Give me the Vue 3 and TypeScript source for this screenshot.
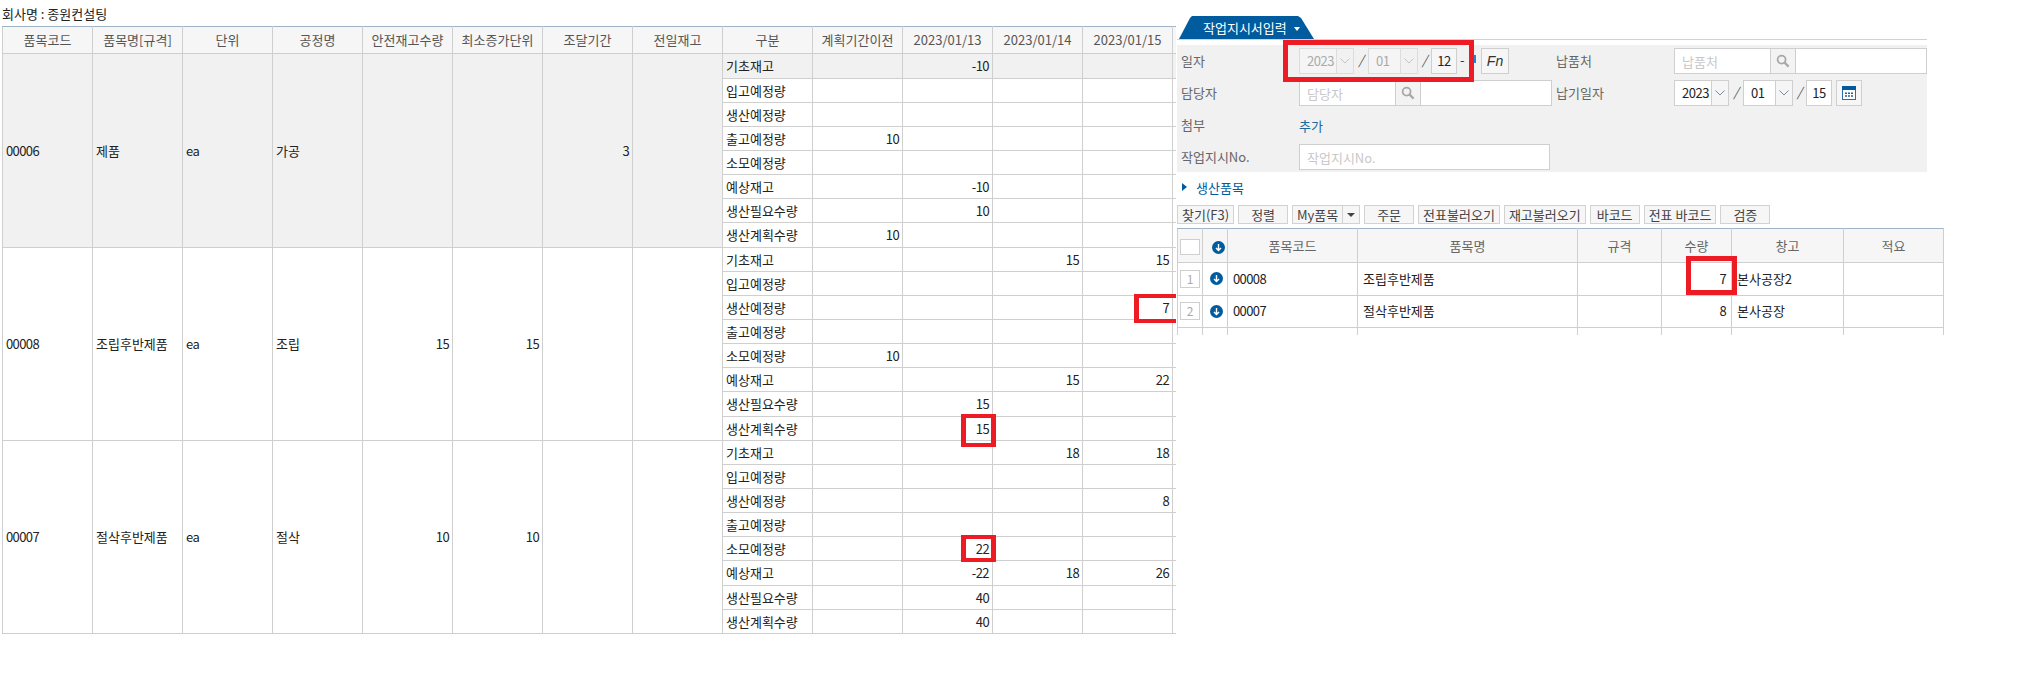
<script setup lang="ts">
interface PlanRow {
  label: string
  tall?: boolean
  shaded?: boolean
  values: string[]
}
interface PlanGroup {
  code: string
  name: string
  unit: string
  process: string
  safety: string
  minimum: string
  lead: string
  shaded: boolean
  rows: PlanRow[]
}
interface OrderItem {
  no: number
  code: string
  name: string
  qty: string
  store: string
}

const headers: string[] = ['품목코드', '품목명[규격]', '단위', '공정명', '안전재고수량', '최소증가단위', '조달기간', '전일재고', '구분', '계획기간이전', '2023/01/13', '2023/01/14', '2023/01/15', '']

function makeRows(vals: string[][], tallIndex: number[], shadeFirst: boolean): PlanRow[] {
  const labels = ['기초재고', '입고예정량', '생산예정량', '출고예정량', '소모예정량', '예상재고', '생산필요수량', '생산계획수량']
  return labels.map((label, i) => ({
    label,
    tall: tallIndex.includes(i),
    shaded: shadeFirst && i === 0,
    values: vals[i],
  }))
}

const groups: PlanGroup[] = [
  {
    code: '00006', name: '제품', unit: 'ea', process: '가공', safety: '', minimum: '', lead: '3', shaded: true,
    rows: makeRows([
      ['', '-10', '', '', ''],
      ['', '', '', '', ''],
      ['', '', '', '', ''],
      ['10', '', '', '', ''],
      ['', '', '', '', ''],
      ['', '-10', '', '', ''],
      ['', '10', '', '', ''],
      ['10', '', '', '', ''],
    ], [0, 7], true),
  },
  {
    code: '00008', name: '조립후반제품', unit: 'ea', process: '조립', safety: '15', minimum: '15', lead: '', shaded: false,
    rows: makeRows([
      ['', '', '15', '15', ''],
      ['', '', '', '', ''],
      ['', '', '', '7', ''],
      ['', '', '', '', ''],
      ['10', '', '', '', ''],
      ['', '', '15', '22', ''],
      ['', '15', '', '', ''],
      ['', '15', '', '', ''],
    ], [6], false),
  },
  {
    code: '00007', name: '절삭후반제품', unit: 'ea', process: '절삭', safety: '10', minimum: '10', lead: '', shaded: false,
    rows: makeRows([
      ['', '', '18', '18', ''],
      ['', '', '', '', ''],
      ['', '', '', '8', ''],
      ['', '', '', '', ''],
      ['', '22', '', '', ''],
      ['', '-22', '18', '26', ''],
      ['', '40', '', '', ''],
      ['', '40', '', '', ''],
    ], [5], false),
  },
]

const toolsBefore: string[] = ['찾기(F3)', '정렬']
const toolsAfter: string[] = ['주문', '전표불러오기', '재고불러오기', '바코드', '전표 바코드', '검증']

const items: OrderItem[] = [
  { no: 1, code: '00008', name: '조립후반제품', qty: '7', store: '본사공장2' },
  { no: 2, code: '00007', name: '절삭후반제품', qty: '8', store: '본사공장' },
]
</script>

<template>
  <div class="page">
    <section class="plan">
      <div class="company">회사명 : 종원컨설팅</div>
      <div class="plan-clip">
        <table class="plan-table">
          <thead>
            <tr class="plan-head">
              <th v-for="(h, i) in headers" :key="i">{{ h }}</th>
            </tr>
          </thead>
          <tbody v-for="g in groups" :key="g.code">
            <tr v-for="(r, ri) in g.rows" :key="r.label" :class="r.tall ? 'row-tall' : 'row'">
              <template v-if="ri === 0">
                <td rowspan="8" class="num" :class="{ shade: g.shaded }">{{ g.code }}</td>
                <td rowspan="8" :class="{ shade: g.shaded }">{{ g.name }}</td>
                <td rowspan="8" class="num" :class="{ shade: g.shaded }">{{ g.unit }}</td>
                <td rowspan="8" :class="{ shade: g.shaded }">{{ g.process }}</td>
                <td rowspan="8" class="num right" :class="{ shade: g.shaded }">{{ g.safety }}</td>
                <td rowspan="8" class="num right" :class="{ shade: g.shaded }">{{ g.minimum }}</td>
                <td rowspan="8" class="num right" :class="{ shade: g.shaded }">{{ g.lead }}</td>
                <td rowspan="8" :class="{ shade: g.shaded }"></td>
              </template>
              <td :class="{ shade: r.shaded }">{{ r.label }}</td>
              <td v-for="(v, vi) in r.values" :key="vi" class="num right" :class="{ shade: r.shaded }">{{ v }}</td>
            </tr>
          </tbody>
        </table>
      </div>
    </section>

    <section class="order">
      <div class="tab-line">
        <div class="tab">
          <span>작업지시서입력</span>
          <i class="tab-caret"></i>
        </div>
      </div>

      <div class="form">
        <label class="form-label">일자</label>
        <div class="field">
          <div class="sel sel-year off">
            <span class="sel-value">2023</span>
            <span class="sel-arrow"><svg width="10" height="6" viewBox="0 0 10 6"><path d="M.5.5 5 5 9.5.5" fill="none" stroke="#c4c4c4" /></svg></span>
          </div>
          <span class="slash">/</span>
          <div class="sel sel-month off">
            <span class="sel-value">01</span>
            <span class="sel-arrow"><svg width="10" height="6" viewBox="0 0 10 6"><path d="M.5.5 5 5 9.5.5" fill="none" stroke="#c4c4c4" /></svg></span>
          </div>
          <span class="slash slash-narrow">/</span>
          <div class="day">12</div>
          <span class="dash">-</span>
          <i class="blue-tick"></i>
          <button class="square fn" type="button">Fn</button>
        </div>
        <label class="form-label">납품처</label>
        <div class="field">
          <input class="text code-input code-short" placeholder="납품처" />
          <span class="search">
            <svg width="14" height="14" viewBox="0 0 14 14"><circle cx="5.6" cy="5.6" r="4" fill="none" stroke="#a8a8a8" stroke-width="1.8" /><path d="m8.6 8.6 4 4" stroke="#a8a8a8" stroke-width="2.2" /></svg>
          </span>
          <input class="text name-input name-short" />
        </div>

        <label class="form-label">담당자</label>
        <div class="field">
          <input class="text code-input" placeholder="담당자" />
          <span class="search">
            <svg width="14" height="14" viewBox="0 0 14 14"><circle cx="5.6" cy="5.6" r="4" fill="none" stroke="#a8a8a8" stroke-width="1.8" /><path d="m8.6 8.6 4 4" stroke="#a8a8a8" stroke-width="2.2" /></svg>
          </span>
          <input class="text name-input" />
        </div>
        <label class="form-label">납기일자</label>
        <div class="field">
          <div class="sel sel-year">
            <span class="sel-value">2023</span>
            <span class="sel-arrow"><svg width="10" height="6" viewBox="0 0 10 6"><path d="M.5.5 5 5 9.5.5" fill="none" stroke="#7f8c9c" /></svg></span>
          </div>
          <span class="slash">/</span>
          <div class="sel sel-month">
            <span class="sel-value">01</span>
            <span class="sel-arrow"><svg width="10" height="6" viewBox="0 0 10 6"><path d="M.5.5 5 5 9.5.5" fill="none" stroke="#7f8c9c" /></svg></span>
          </div>
          <span class="slash slash-narrow">/</span>
          <div class="day white">15</div>
          <button class="square cal" type="button">
            <svg width="14" height="14" viewBox="0 0 14 14">
              <rect x=".5" y=".5" width="13" height="13" fill="#fff" stroke="#2f6ea5" />
              <rect width="14" height="4" fill="#005b9f" />
              <path d="M3 6.5h2v1.6H3zM6 6.5h2v1.6H6zM9 6.5h2v1.6H9zM3 9.2h2v1.6H3zM6 9.2h2v1.6H6zM9 9.2h2v1.6H9z" fill="#2f5f8c" />
            </svg>
          </button>
        </div>

        <label class="form-label">첨부</label>
        <div class="field"><a class="attach">추가</a></div>
        <span></span>
        <span></span>

        <label class="form-label">작업지시No.</label>
        <div class="field"><input class="text wide" placeholder="작업지시No." /></div>
        <span></span>
        <span></span>
      </div>

      <h3 class="section-title"><i class="section-mark"></i>생산품목</h3>

      <div class="toolbar">
        <button v-for="t in toolsBefore" :key="t" class="tool" type="button">{{ t }}</button>
        <div class="tool tool-split">
          <span class="split-main">My품목</span>
          <span class="split-caret"><i></i></span>
        </div>
        <button v-for="t in toolsAfter" :key="t" class="tool" type="button">{{ t }}</button>
      </div>

      <div class="grid-clip">
        <table class="grid">
          <colgroup>
            <col class="c-a" /><col class="c-a" /><col class="c-code" /><col class="c-name" /><col class="c-spec" /><col class="c-qty" /><col class="c-store" /><col class="c-note" />
          </colgroup>
          <thead>
            <tr class="grid-head">
              <th><span class="check"></span></th>
              <th>
                <svg class="head-arrow" width="13" height="13" viewBox="0 0 13 13"><circle cx="6.5" cy="6.5" r="6.5" fill="#005b9f" /><path d="M6.5 3v6.4M4 7l2.5 2.6L9 7" fill="none" stroke="#fff" stroke-width="1.4" /></svg>
              </th>
              <th>품목코드</th>
              <th>품목명</th>
              <th>규격</th>
              <th>수량</th>
              <th>창고</th>
              <th>적요</th>
            </tr>
          </thead>
          <tbody>
            <tr v-for="it in items" :key="it.code" class="grid-row">
              <td class="center"><span class="row-no">{{ it.no }}</span></td>
              <td class="center">
                <svg class="row-arrow" width="13" height="13" viewBox="0 0 13 13"><circle cx="6.5" cy="6.5" r="6.5" fill="#005b9f" /><path d="M6.5 3v6.4M4 7l2.5 2.6L9 7" fill="none" stroke="#fff" stroke-width="1.4" /></svg>
              </td>
              <td class="num">{{ it.code }}</td>
              <td>{{ it.name }}</td>
              <td></td>
              <td class="num right">{{ it.qty }}</td>
              <td>{{ it.store }}</td>
              <td></td>
            </tr>
            <tr class="grid-row"><td></td><td></td><td></td><td></td><td></td><td></td><td></td><td></td></tr>
          </tbody>
        </table>
      </div>
    </section>

    <div class="mark mark-date"></div>
    <div class="mark mark-plan-seven"></div>
    <div class="mark mark-plan-fifteen"></div>
    <div class="mark mark-plan-twentytwo"></div>
    <div class="mark mark-grid-seven"></div>
  </div>
</template>

<style scoped>
.page {
  position: relative;
  display: flex;
  width: 2035px;
  height: 673px;
  overflow: hidden;
  background: #fff;
  color: #222;
  font-family: "Noto Sans CJK KR", "Noto Sans", sans-serif;
  font-size: 13px;
}

.plan {
  width: 1174px;
  margin-left: 2px;
  flex: none;
}
.company {
  height: 26px;
  line-height: 28px;
  color: #222;
}
.plan-clip {
  width: 1174px;
  overflow: hidden;
}
.plan-table {
  width: 1261px;
  table-layout: fixed;
  border-collapse: collapse;
}
.plan-table th,
.plan-table td {
  box-sizing: border-box;
  width: 90px;
  padding: 0 3px;
  border: 1px solid #cfcfcf;
  line-height: 16px;
  font-weight: 400;
  white-space: nowrap;
  overflow: hidden;
}
.plan-table th {
  border-top: 1px solid #9fb3c6;
  background: #f6f6f6;
  color: #555;
  text-align: center;
}
.plan-head { height: 27px; }
.row { height: 24px; }
.row-tall { height: 25px; }
.shade { background: #f1f1f1; }
.num { letter-spacing: -0.6px; }
.right { text-align: right; }
.center { text-align: center; }

.order {
  width: 766px;
  margin-left: 1px;
  flex: none;
}
.tab-line {
  display: flex;
  width: 750px;
  height: 24px;
  margin-top: 16px;
  padding-left: 2px;
  box-sizing: border-box;
  border-bottom: 1px solid #d2d2d2;
}
.tab {
  display: flex;
  align-items: center;
  gap: 7px;
  width: 135px;
  height: 23px;
  padding-left: 24px;
  box-sizing: border-box;
  background: #005b9f;
  color: #fff;
  line-height: 23px;
  clip-path: polygon(0 100%, 11px 2px, 13px 0, 119px 0, 122px 2px, 100% 100%);
}
.tab-caret {
  width: 0;
  height: 0;
  margin-top: 2px;
  border-left: 3.5px solid transparent;
  border-right: 3.5px solid transparent;
  border-top: 4px solid #fff;
}

.form {
  display: grid;
  grid-template-columns: 118px 257px 118px 1fr;
  grid-auto-rows: 26px;
  row-gap: 6px;
  align-items: center;
  width: 750px;
  height: 127px;
  margin-top: 5px;
  padding: 3px 0 0 4px;
  box-sizing: border-box;
  background: #f1f1f1;
}
.form-label {
  color: #666;
  line-height: 26px;
  white-space: nowrap;
}
.field {
  display: flex;
  align-items: center;
  height: 26px;
}
.sel {
  display: flex;
  height: 26px;
  box-sizing: border-box;
  border: 1px solid #cfcfcf;
  background: #fff;
  line-height: 24px;
}
.sel-year { width: 55px; }
.sel-month { width: 50px; }
.sel-value {
  flex: 1;
  padding-left: 7px;
  letter-spacing: -0.5px;
  color: #222;
}
.sel-arrow {
  display: flex;
  align-items: center;
  justify-content: center;
  width: 16px;
  border-left: 1px solid #cfcfcf;
  background: #f5f5f5;
}
.off {
  border-color: #dcdcdc;
  background: #f5f5f5;
}
.off .sel-value { color: #aaa; }
.off .sel-arrow {
  border-left-color: #dcdcdc;
  background: #f1f1f1;
}
.slash {
  width: 14px;
  margin-top: -4px;
  text-align: center;
  color: #555;
  font-style: italic;
}
.slash-narrow { width: 13px; }
.day {
  width: 26px;
  height: 26px;
  box-sizing: border-box;
  border: 1px solid #cfcfcf;
  background: #f6f6f6;
  line-height: 24px;
  text-align: center;
  letter-spacing: -0.5px;
}
.day.white { background: #fff; }
.dash {
  width: 17px;
  margin-top: -4px;
  padding-left: 3px;
  box-sizing: border-box;
  color: #333;
}
.blue-tick {
  width: 2px;
  height: 8px;
  margin-top: -4px;
  background: #2a83c9;
}
.square {
  width: 26px;
  height: 26px;
  padding: 0;
  box-sizing: border-box;
  border: 1px solid #cfcfcf;
  background: #f6f6f6;
  display: flex;
  align-items: center;
  justify-content: center;
}
.fn {
  width: 28px;
  margin-left: 5px;
  font-family: "Liberation Sans", sans-serif;
  font-size: 14px;
  font-style: italic;
  color: #333;
}
.cal { margin-left: 4px; }
.text {
  height: 26px;
  padding: 0 7px;
  box-sizing: border-box;
  border: 1px solid #cfcfcf;
  background: #fff;
  font: inherit;
  color: #222;
  outline: none;
}
.text::placeholder {
  color: #c8c8c8;
  opacity: 1;
}
.code-input {
  width: 96px;
  border-right: 0;
}
.code-short { width: 96px; }
.name-input {
  width: 131px;
  border-left: 0;
}
.name-short { width: 131px; }
.wide { width: 251px; }
.search {
  display: flex;
  align-items: center;
  justify-content: center;
  width: 26px;
  height: 26px;
  box-sizing: border-box;
  border: 1px solid #cfcfcf;
  background: #f3f3f3;
}
.attach { color: #1b6a9c; }

.section-title {
  display: flex;
  align-items: center;
  gap: 9px;
  height: 18px;
  margin: 6px 0 9px;
  padding-left: 5px;
  color: #005b9f;
  font-size: 13px;
  font-weight: 400;
}
.section-mark {
  width: 0;
  height: 0;
  border-top: 4px solid transparent;
  border-bottom: 4px solid transparent;
  border-left: 5px solid #005b9f;
}

.toolbar {
  display: flex;
  gap: 4px;
  height: 19px;
}
.tool {
  min-width: 50px;
  height: 19px;
  padding: 0 4px;
  box-sizing: border-box;
  border: 1px solid #d2d2d2;
  background: #f6f6f6;
  color: #444;
  font: inherit;
  line-height: 17px;
  white-space: nowrap;
}
.tool-split {
  display: flex;
  width: 68px;
  padding: 0;
}
.split-main {
  width: 49px;
  text-align: center;
}
.split-caret {
  display: flex;
  align-items: center;
  justify-content: center;
  flex: 1;
  border-left: 1px solid #d2d2d2;
}
.split-caret i {
  width: 0;
  height: 0;
  border-left: 4px solid transparent;
  border-right: 4px solid transparent;
  border-top: 4px solid #444;
}

.grid-clip {
  width: 767px;
  height: 107px;
  margin-top: 4px;
  overflow: hidden;
}
.grid {
  width: 767px;
  table-layout: fixed;
  border-collapse: collapse;
}
.c-a { width: 25px; }
.c-code { width: 130px; }
.c-name { width: 220px; }
.c-spec { width: 84px; }
.c-qty { width: 70px; }
.c-store { width: 112px; }
.c-note { width: 100px; }
.grid th,
.grid td {
  padding: 0 5px;
  border: 1px solid #cfcfcf;
  line-height: 16px;
  font-weight: 400;
  white-space: nowrap;
}
.grid th {
  border-top: 1px solid #9fb3c6;
  background: #f6f6f6;
  color: #666;
  text-align: center;
}
.grid th:nth-child(-n+2),
.grid td:nth-child(-n+2) { padding: 0; }
.grid-head { height: 34px; }
.grid-row { height: 32.5px; }
.check {
  display: block;
  width: 20px;
  height: 16px;
  margin: 3px 0 0 2px;
  box-sizing: border-box;
  border: 1px solid #cfcfcf;
  background: #fff;
}
.row-no {
  display: block;
  width: 20px;
  height: 18px;
  margin-left: 2px;
  box-sizing: border-box;
  border: 1px solid #cfcfcf;
  background: #fff;
  color: #aaa;
  font-size: 12px;
  line-height: 16px;
  text-align: center;
}
.head-arrow {
  display: block;
  margin: 3px 0 0 9px;
}
.row-arrow {
  display: block;
  margin-left: 7px;
}

.mark {
  position: absolute;
  box-sizing: border-box;
  border: 4px solid #ed1c24;
}
.mark-date { left: 1283px; top: 40px; width: 191px; height: 42px; border-width: 5px; }
.mark-plan-seven { left: 1134px; top: 294px; width: 42px; height: 29px; border-right: 0; border-left-width: 5px; }
.mark-plan-fifteen { left: 961px; top: 414px; width: 35px; height: 33px; border-width: 4px 5px; }
.mark-plan-twentytwo { left: 961px; top: 535px; width: 35px; height: 27px; border-width: 4px 5px; }
.mark-grid-seven { left: 1686px; top: 256px; width: 51px; height: 39px; border-width: 5px; }
</style>

<style>
html, body { margin: 0; background: #fff; }
</style>
